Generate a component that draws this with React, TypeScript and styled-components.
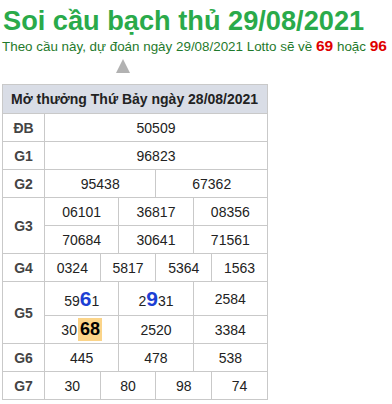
import styled, { createGlobalStyle } from "styled-components";

const GlobalStyle = createGlobalStyle`
  body {
    margin: 0;
    background: #fff;
    font-family: "Liberation Sans", Arial, sans-serif;
  }
`;

const Page = styled.div`
  padding: 0 2px;
  width: 392px;
  box-sizing: border-box;
`;

const Title = styled.h1`
  margin: 0;
  padding: 6px 0 0 1px;
  font-size: 27.2px;
  line-height: 30px;
  font-weight: bold;
  color: #2aaa4a;
  white-space: nowrap;
`;

const Subtitle = styled.p`
  margin: 0;
  height: 20px;
  font-size: 13.4px;
  line-height: 20px;
  color: #1f7a2c;
  white-space: nowrap;
`;

const Hot = styled.b`
  color: #e00000;
  font-size: 15.5px;
`;

const ArrowRow = styled.div`
  height: 28px;
  display: flex;
  align-items: flex-start;
  padding: 3px 0 0 114px;
  box-sizing: border-box;
`;

const ArrowUp = styled.div`
  width: 0;
  height: 0;
  border-left: 7px solid transparent;
  border-right: 7px solid transparent;
  border-bottom: 14px solid #b2b2b2;
`;

const Table = styled.table`
  border-collapse: collapse;
  table-layout: fixed;
  width: 266px;
  font-size: 14px;
  color: #222;
`;

const Head = styled.th`
  background: #d9dde6;
  text-align: left;
  font-weight: bold;
  height: 28px;
  padding: 0 0 0 8px;
  border: 1px solid #c9c9c9;
  white-space: nowrap;
  color: #222;
`;

const Label = styled.td`
  width: 42px;
  text-align: center;
  font-weight: bold;
  color: #444;
  border: 1px solid #c9c9c9;
  padding: 0;
`;

const Cell = styled.td<{ $tall?: boolean }>`
  height: ${(p) => (p.$tall ? 33 : 27)}px;
  text-align: center;
  border: 1px solid #c9c9c9;
  padding: 0;
  white-space: nowrap;
`;

const Blue = styled.b`
  color: #1c3fd4;
  font-size: 21px;
`;

const Mark = styled.b`
  display: inline-block;
  background: #fbd489;
  color: #000;
  font-size: 18px;
  line-height: 23px;
  padding: 0 2px;
  margin-left: 1px;
`;

type Row = { label: string; values: React.ReactNode[][]; tall?: boolean[] };

const rows: Row[] = [
  { label: "ĐB", values: [["50509"]] },
  { label: "G1", values: [["96823"]] },
  { label: "G2", values: [["95438", "67362"]] },
  {
    label: "G3",
    values: [
      ["06101", "36817", "08356"],
      ["70684", "30641", "71561"],
    ],
  },
  { label: "G4", values: [["0324", "5817", "5364", "1563"]] },
  {
    label: "G5",
    tall: [true, false],
    values: [
      [
        <>
          59<Blue>6</Blue>1
        </>,
        <>
          2<Blue>9</Blue>31
        </>,
        "2584",
      ],
      [
        <>
          30<Mark>68</Mark>
        </>,
        "2520",
        "3384",
      ],
    ],
  },
  { label: "G6", values: [["445", "478", "538"]] },
  { label: "G7", values: [["30", "80", "98", "74"]] },
];

export default function App() {
  return (
    <Page>
      <GlobalStyle />
      <Title>Soi cầu bạch thủ 29/08/2021</Title>
      <Subtitle>
        Theo cầu này, dự đoán ngày 29/08/2021 Lotto sẽ về <Hot>69</Hot> hoặc{" "}
        <Hot>96</Hot>
      </Subtitle>
      <ArrowRow>
        <ArrowUp />
      </ArrowRow>
      <Table>
        <colgroup>
          <col style={{ width: 42 }} />
          {Array.from({ length: 12 }).map((_, i) => (
            <col key={i} />
          ))}
        </colgroup>
        <thead>
          <tr>
            <Head colSpan={13}>Mở thưởng Thứ Bảy ngày 28/08/2021</Head>
          </tr>
        </thead>
        <tbody>
          {rows.map((row) =>
            row.values.map((line, li) => (
              <tr key={row.label + li}>
                {li === 0 && <Label rowSpan={row.values.length}>{row.label}</Label>}
                {line.map((v, vi) => (
                  <Cell key={vi} colSpan={12 / line.length} $tall={row.tall?.[li]}>
                    {v}
                  </Cell>
                ))}
              </tr>
            ))
          )}
        </tbody>
      </Table>
    </Page>
  );
}
